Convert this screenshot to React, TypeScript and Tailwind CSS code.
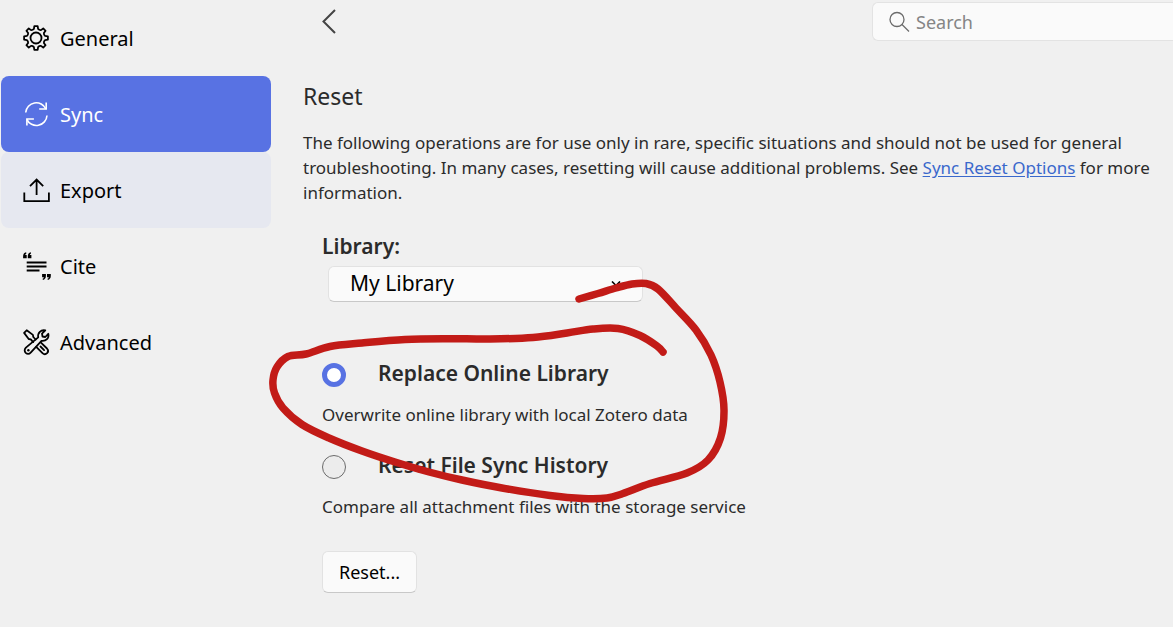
import React, { useState } from "react";
import type { ReactNode } from "react";

type Point = [number, number];

/* Smooth curve through a list of points (Catmull-Rom to cubic Bezier). */
function smoothPath(points: Point[]): string {
  let d = `M${points[0][0]} ${points[0][1]}`;
  for (let i = 0; i < points.length - 1; i++) {
    const p0 = points[Math.max(i - 1, 0)];
    const p1 = points[i];
    const p2 = points[i + 1];
    const p3 = points[Math.min(i + 2, points.length - 1)];
    d += `C${p1[0] + (p2[0] - p0[0]) / 6} ${p1[1] + (p2[1] - p0[1]) / 6} ${p2[0] - (p3[0] - p1[0]) / 6} ${p2[1] - (p3[1] - p1[1]) / 6} ${p2[0]} ${p2[1]}`;
  }
  return d;
}

const markerStroke = smoothPath([
  [579, 299], [598, 293.5], [616, 288], [632, 284], [646, 283.5], [658, 289],
  [676, 308], [696, 330], [711, 355], [720, 382], [724, 410], [720.5, 438],
  [708, 460], [687, 473], [650, 483.5], [623, 493.5], [607, 498], [583, 498.5],
  [550, 495.5], [502, 488], [462, 480], [429, 472], [395, 462], [362, 451],
  [329, 438], [302, 424.5], [283, 408], [274.5, 393], [273, 380], [277, 367],
  [288, 356.5], [306, 354], [330, 346.5], [362, 343], [405, 339.5], [447, 338.7],
  [490, 339], [533, 337.5], [567, 333], [593, 329], [618, 328.5], [640, 335.5],
  [657, 346], [663, 352],
]);

/* Outline of the eight-toothed gear, centred on 14,14. */
function gearPath(): string {
  const at = (r: number, deg: number) => {
    const a = (deg * Math.PI) / 180;
    return `${(14 + r * Math.cos(a)).toFixed(2)} ${(14 + r * Math.sin(a)).toFixed(2)}`;
  };
  let d = "";
  for (let i = 0; i < 8; i++) {
    const a = i * 45;
    d += `${i ? "L" : "M"}${at(9.3, a - 13)}L${at(12, a - 8)}L${at(12, a + 8)}L${at(9.3, a + 13)}Q${at(8.4, a + 22.5)} ${at(9.3, a + 32)}`;
  }
  return d + "Z";
}

function Icon({ children }: { children: ReactNode }) {
  return (
    <svg viewBox="0 0 28 28" className="size-7 shrink-0 overflow-visible" fill="none" stroke="currentColor" strokeWidth="1.8" aria-hidden="true">
      {children}
    </svg>
  );
}

const GearIcon = () => (
  <Icon>
    <path d={gearPath()} strokeLinejoin="round" />
    <circle cx="14" cy="14" r="5.5" />
  </Icon>
);

const SyncIcon = () => (
  <Icon>
    <g strokeWidth="1.6">
      <path d="M3.7 12.5A10.6 10.6 0 0 1 23.9 9" />
      <path d="M24.2 2.5v6.5h-7" />
      <path d="M25 15.5A10.6 10.6 0 0 1 4.8 19.3" />
      <path d="M4.9 25.5v-6.5h7" />
    </g>
  </Icon>
);

const ExportIcon = () => (
  <Icon>
    <path d="M2.3 16.5v8.7h24.6v-8.7" />
    <path d="M14.6 19V3.5M8 10.2l6.6-6.7 6.6 6.7" />
  </Icon>
);

const CiteIcon = () => (
  <Icon>
    <path d="M4.7 10.5h19.8M4.7 14.5h19.8M4.7 18.5h12.8" strokeWidth="1.8" />
    <g fill="currentColor" stroke="none">
      <path d="M4.1.3C2 .9 1.1 2.3 1.1 4.3v2h3.6V3H3.2c.1-.7.4-1.2 1.2-1.6zM8.8.3C6.7.9 5.8 2.3 5.8 4.3v2h3.6V3H7.9c.1-.7.4-1.2 1.2-1.6z" />
      <path d="M20.9 28c1.9-.6 3-2 3-4v-2h-3.8v3.2h1.8c-.1.7-.5 1.2-1.3 1.6zM25.8 28c1.9-.6 3-2 3-4v-2H25v3.2h1.8c-.1.7-.5 1.2-1.3 1.6z" />
    </g>
  </Icon>
);

const ToolsIcon = () => (
  <Icon>
    <g strokeLinejoin="round" strokeLinecap="round">
      <path d="M16.2 9.4C15.5 4.9 18.8 1.5 23.3 2.4L20 5.7l.5 2.8 2.8.5 3-3.2c1 4.4-2.3 7.7-6.8 7L8.9 24.4c-1.5 1.6-3.7 1.8-5.2.4-1.5-1.5-1.3-3.7.2-5.2z" />
      <path d="M11.2 14.1L8.8 11.4 6.7 11 2.1 4.9 4.7 2.3l6.2 4.6.4 2.1 2.3 2.5" />
      <path d="M18.7 14.3l6.3 6.2c1.5 1.6 1.4 3.3.1 4.7-1.4 1.3-3.2 1.3-4.6-.1l-6.3-6.3" />
      <path d="M18.5 18.5l3.6 3.6" />
      <circle cx="6.4" cy="22.2" r="1.2" fill="currentColor" stroke="none" />
    </g>
  </Icon>
);

const panes = [
  { name: "General", icon: <GearIcon /> },
  { name: "Sync", icon: <SyncIcon /> },
  { name: "Export", icon: <ExportIcon /> },
  { name: "Cite", icon: <CiteIcon /> },
  { name: "Advanced", icon: <ToolsIcon /> },
];

const paneColors: Record<string, string> = {
  Sync: "bg-[#5872e3] text-white",
  Export: "bg-[#e6e8f0] text-black",
};

const resetModes = [
  { id: "replace-online", title: "Replace Online Library", text: "Overwrite online library with local Zotero data" },
  { id: "reset-history", title: "Reset File Sync History", text: "Compare all attachment files with the storage service" },
];

export default function App() {
  const [mode, setMode] = useState("replace-online");

  return (
    <div className="relative flex min-h-screen overflow-hidden bg-[#f0f0f0] font-['Noto_Sans','Open_Sans',sans-serif] text-[#2b2b2b]">
      <nav className="flex w-[271px] shrink-0 flex-col pl-px" aria-label="Settings">
        {panes.map((pane) => (
          <button
            key={pane.name}
            type="button"
            className={`flex h-19 items-center gap-2.5 rounded-lg pl-[21px] text-left text-[20px] leading-8 ${paneColors[pane.name] ?? "text-black"}`}
          >
            {pane.icon}
            <span className="pt-0.5">{pane.name}</span>
          </button>
        ))}
      </nav>

      <main className="min-w-0 flex-1 pl-8">
        <header className="flex items-start justify-between pt-0.5">
          <button type="button" aria-label="Back" className="ml-4 flex h-10 w-6 items-center justify-center text-[#444]">
            <svg viewBox="0 0 24 26" className="h-[26px] w-6" fill="none" stroke="currentColor" strokeWidth="2" aria-hidden="true">
              <path d="M16 1L4.5 12.5 16 24" />
            </svg>
          </button>
          <label className="flex h-[39px] w-[301px] items-center gap-1.5 rounded-l-md border border-r-0 border-[#e3e3e3] bg-[#fafafa] pl-[15px]">
            <svg viewBox="0 0 22 22" className="size-[22px] shrink-0" fill="none" stroke="#6b6b6b" strokeWidth="1.3" aria-hidden="true">
              <circle cx="9" cy="8.5" r="7" />
              <path d="M14 13.5l7 7" />
            </svg>
            <input
              type="text"
              aria-label="Search"
              placeholder="Search"
              className="min-w-0 flex-1 bg-transparent pt-px text-[18px] outline-none placeholder:text-[#858585]"
            />
          </label>
        </header>

        <section className="pt-[38px] pr-5">
          <h1 className="text-[23px] leading-8">Reset</h1>
          <p className="mt-[18px] text-[17px] leading-[25px]">
            The following operations are for use only in rare, specific situations and should not be used for general
            troubleshooting. In many cases, resetting will cause additional problems. See{" "}
            <a href="#sync-reset-options" className="text-[#3a68cc] underline underline-offset-2">Sync Reset Options</a> for more
            information.
          </p>

          <div className="pt-[25px] pl-[19px]">
            <label htmlFor="library" className="block text-[21px] leading-8 font-semibold">Library:</label>
            <div className="relative mt-1 ml-1.5 w-[315px]">
              <select
                id="library"
                className="block h-9 w-full appearance-none rounded-md border border-[#e2e2e2] border-b-[#c8c8c8] bg-[#fafafa] pb-0.5 pl-[21px] text-[21px] leading-8 text-black"
              >
                <option>My Library</option>
              </select>
              <svg viewBox="0 0 10 6" className="pointer-events-none absolute top-[15px] right-[22px] h-1.5 w-2.5" fill="none" stroke="black" strokeWidth="1.6" aria-hidden="true">
                <path d="M1 0.5l4 4 4-4" />
              </svg>
            </div>

            <div className="mt-[55px] flex flex-col gap-[18px]">
              {resetModes.map((item) => (
                <div key={item.id}>
                  <div className="flex h-8 items-center gap-8">
                    <input
                      type="radio"
                      id={item.id}
                      name="reset-mode"
                      checked={mode === item.id}
                      onChange={() => setMode(item.id)}
                      className="mt-1 size-6 shrink-0 appearance-none rounded-full border border-[#6b6b6b] bg-[#ececec] checked:border-[5px] checked:border-[#5872e3] checked:bg-white"
                    />
                    <label htmlFor={item.id} className="text-[21px] leading-8 font-semibold">{item.title}</label>
                  </div>
                  <p className="mt-2.5 text-[17px] leading-8">{item.text}</p>
                </div>
              ))}
            </div>

            <button
              type="button"
              className="mt-7 h-[42px] rounded-md border border-[#e2e2e2] border-b-[#c8c8c8] bg-[#fafafa] px-4 text-[18px] text-black"
            >
              Reset...
            </button>
          </div>
        </section>
      </main>

      <svg viewBox="0 0 1173 627" className="pointer-events-none absolute top-0 left-0 h-[627px] w-[1173px]" fill="none" aria-hidden="true">
        <path d={markerStroke} stroke="#c21b17" strokeWidth="7.5" strokeLinecap="round" strokeLinejoin="round" />
      </svg>
    </div>
  );
}
